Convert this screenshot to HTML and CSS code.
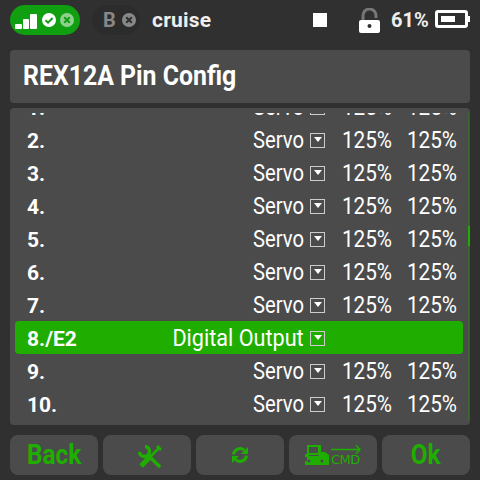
FILE: index.html
```html
<!DOCTYPE html>
<html lang="en">
<head>
<meta charset="UTF-8">
<meta name="viewport" content="width=device-width, initial-scale=1.0">
<title>REX12A Pin Config</title>
<link rel="stylesheet" href="styles.css">
</head>
<body>

<header class="topbar">
    <div class="link-pill">
        <svg width="22" height="16" viewBox="0 0 22 16" class="bars">
            <rect x="0" y="10" width="7" height="5" rx="1"/>
            <rect x="8" y="5" width="6" height="10" rx="1"/>
            <rect x="15" y="0" width="7" height="15" rx="1"/>
        </svg>
        <svg width="14" height="14" viewBox="0 0 14 14" class="dot">
            <circle cx="7" cy="7" r="7" fill="#fff"/>
            <path d="M3.500 7.200 6 9.600 10.600 5" fill="none" stroke="#109f10" stroke-width="2"/>
        </svg>
        <svg width="14" height="14" viewBox="0 0 14 14" class="dot">
            <circle cx="7" cy="7" r="7" fill="#8fd08f"/>
            <path d="M4.200 4.200 9.800 9.800M9.800 4.200 4.200 9.800" stroke="#109f10" stroke-width="2"/>
        </svg>
    </div>
    <div class="link-b">
        <span class="b-letter">B</span>
        <svg width="14" height="14" viewBox="0 0 14 14">
            <circle cx="7" cy="7" r="7" fill="#888"/>
            <path d="M4.200 4.200 9.800 9.800M9.800 4.200 4.200 9.800" stroke="#303030" stroke-width="2"/>
        </svg>
    </div>
    <span class="mode">cruise</span>
    <span class="square"></span>
    <svg width="21" height="25" viewBox="0 0 21 25" class="lock">
        <path d="M4 13V7.500A6.500 6.500 0 0 1 17 7.500V10" fill="none" stroke="#777" stroke-width="3"/>
        <rect x="0" y="12" width="21" height="13" rx="2" fill="#fff"/>
        <circle cx="10.500" cy="18" r="2" fill="#303030"/>
    </svg>
    <span class="batt-text">61%</span>
    <div class="battery"><span class="batt-level"></span></div>
</header>

<div class="title-panel"><span class="title-text">REX12A Pin Config</span></div>

<div class="list-panel">
    <div class="rows-clip">
        <div class="rows" id="rows"></div>
    </div>
    <div class="scrollbar"><span class="thumb"></span></div>
</div>

<footer class="buttons">
    <div class="btn"><span class="btn-text">Back</span></div>
    <div class="btn">
        <svg width="24" height="24" viewBox="0 0 24 24" fill="none" stroke="#1fae00" class="tools">
            <path d="M7 1.500A5 5 0 1 1 1.500 7" stroke-width="3.500"/>
            <path d="M9 9 22 22" stroke-width="3.500"/>
            <path d="M21.500 2.500 10 14" stroke-width="2.500"/>
            <path d="M19 1 23 5" stroke-width="3"/>
            <path d="M11 13 3 21" stroke-width="5"/>
        </svg>
    </div>
    <div class="btn">
        <svg width="16" height="16" viewBox="0 0 16 16" fill="none" stroke="#1fae00" stroke-width="3">
            <path d="M1.500 7.500A6.500 6.500 0 0 1 12.500 3.500"/>
            <path d="M14.500 8.500A6.500 6.500 0 0 1 3.500 12.500"/>
            <path d="M16 0V7H9Z" fill="#1fae00" stroke="none"/>
            <path d="M0 16V9H7Z" fill="#1fae00" stroke="none"/>
        </svg>
    </div>
    <div class="btn cmd-btn">
        <svg width="24" height="20" viewBox="0 0 24 20" fill="#1fae00">
            <path d="M2 0H16V7H20L24 10V20H0V16H2V12H0V9H2Z"/>
            <rect x="4" y="2" width="9" height="6" fill="#4b4b4b"/>
            <rect x="4" y="10" width="10" height="1" fill="#4b4b4b"/>
            <circle cx="4" cy="16" r="1.500" fill="#4b4b4b"/>
            <circle cx="17" cy="16" r="1.500" fill="#4b4b4b"/>
        </svg>
        <div class="cmd-right">
            <svg width="30" height="9" viewBox="0 0 30 9" fill="none" stroke="#1fae00" stroke-width="1.500">
                <path d="M0 4.500H29M25 0.500 29 4.500 25 8.500"/>
            </svg>
            <span class="cmd-text">CMD</span>
        </div>
    </div>
    <div class="btn"><span class="btn-text">Ok</span></div>
</footer>

<script>
const pins = [
    {name:"1.", type:"Servo"}, {name:"2.", type:"Servo"}, {name:"3.", type:"Servo"},
    {name:"4.", type:"Servo"}, {name:"5.", type:"Servo"}, {name:"6.", type:"Servo"},
    {name:"7.", type:"Servo"}, {name:"8./E2", type:"Digital Output", selected:true},
    {name:"9.", type:"Servo"}, {name:"10.", type:"Servo"}
];

const rows = document.getElementById("rows");

pins.forEach(pin => {
    const pct = pin.selected ? "" : "125%";
    rows.innerHTML += `
    <div class="row ${pin.selected ? "selected" : ""}">
        <span class="pin-name">${pin.name}</span>
        <span class="pin-type">${pin.type}</span>
        <span class="drop"><i></i></span>
        <span class="pct">${pct}</span>
        <span class="pct">${pct}</span>
    </div>`;
});
</script>

</body>
</html>
```

FILE: styles.css
```css
*{
    margin:0;
    padding:0;
    box-sizing:border-box;
    font-family:Roboto,sans-serif;
}

body{
    width:480px;
    height:480px;
    background:#303030;
    color:white;
    overflow:hidden;
}

.topbar{
    height:50px;
    padding:5px 10px 0;
    display:flex;
    align-items:flex-start;
}

.topbar > *{
    flex-shrink:0;
}

.link-pill{
    width:70px;
    height:30px;
    background:#109f10;
    border-radius:15px;
    display:flex;
    align-items:center;
    padding-left:5px;
}

.bars{
    fill:white;
    margin:3px 5px 0 0;
}

.dot + .dot{
    margin-left:4px;
}

.link-b{
    width:48px;
    margin-left:12px;
    height:30px;
    padding-left:11px;
    background:#2c2c2c;
    border-radius:15px;
    display:flex;
    align-items:center;
    gap:6px;
}

.b-letter{
    font-size:20px;
    font-weight:700;
    color:#888;
}

.mode{
    width:160px;
    margin-left:12px;
    line-height:30px;
    font-size:21px;
    font-weight:700;
    color:#eee;
    letter-spacing:.2px;
}

.square{
    width:14px;
    height:14px;
    margin:8px 0 0 1px;
    background:white;
}

.lock{
    margin:3px 0 0 32px;
}

.batt-text{
    margin-left:11px;
    line-height:30px;
    font-size:20px;
    font-weight:700;
    color:#eee;
}

.battery{
    width:33px;
    height:18px;
    margin:5px 0 0 6px;
    border:3px solid white;
    border-radius:3px;
    padding:3px;
    position:relative;
}

.battery:after{
    content:"";
    position:absolute;
    right:-5px;
    top:3px;
    width:2px;
    height:6px;
    background:white;
}

.batt-level{
    display:block;
    width:14px;
    height:6px;
    background:white;
}

.title-panel{
    height:53px;
    margin:0 10px 5px;
    padding-left:13px;
    background:#4b4b4b;
    border-radius:4px;
    line-height:53px;
}

.title-text{
    display:inline-block;
    font-size:27px;
    font-weight:700;
    transform:scaleX(.92);
    transform-origin:left center;
}

.list-panel{
    height:317px;
    margin:0 10px;
    padding-top:5px;
    background:#4b4b4b;
    border-radius:4px;
    position:relative;
}

.rows-clip{
    height:307px;
    overflow:hidden;
}

.rows{
    margin-top:-23px;
    padding:0 7px 0 5px;
}

.row{
    height:33px;
    display:grid;
    grid-template-columns:1fr auto 15px 67px 65px;
    align-items:center;
    padding:2px 6px 0 12px;
    font-size:23px;
    border-radius:4px;
}

.row.selected{
    background:#1fae00;
}

.pin-name{
    font-weight:700;
    font-size:21px;
}

.pin-type{
    margin-right:6px;
    transform:scaleX(.88);
    transform-origin:right center;
}

.selected .pin-type{
    transform:scaleX(.94);
}

.drop{
    width:15px;
    height:15px;
    border:1px solid #ccc;
    display:flex;
    justify-content:center;
    padding-top:3px;
}

.drop i{
    width:0;
    height:0;
    border-left:4px solid transparent;
    border-right:4px solid transparent;
    border-top:5px solid white;
}

.pct{
    text-align:right;
    transform:scaleX(.9);
    transform-origin:right center;
}

.scrollbar{
    position:absolute;
    top:5px;
    bottom:5px;
    right:0;
    width:2px;
    border-left:1px solid #3a6a30;
}

.thumb{
    position:absolute;
    top:113px;
    left:-1px;
    width:2px;
    height:20px;
    background:#1fae00;
}

.buttons{
    margin:10px 10px 0;
    display:flex;
    gap:5px;
}

.btn{
    width:88px;
    height:40px;
    background:#4b4b4b;
    border-radius:8px;
    display:flex;
    align-items:center;
    justify-content:center;
    color:#1fae00;
}

.btn-text{
    font-size:27px;
    font-weight:700;
    transform:scaleX(.9);
}

.tools{
    margin:3px 0 0 5px;
}

.cmd-btn{
    gap:2px;
}

.cmd-right{
    display:flex;
    flex-direction:column;
    line-height:12px;
}

.cmd-text{
    font-family:"DejaVu Sans",sans-serif;
    font-size:13px;
    letter-spacing:-.5px;
}
```
